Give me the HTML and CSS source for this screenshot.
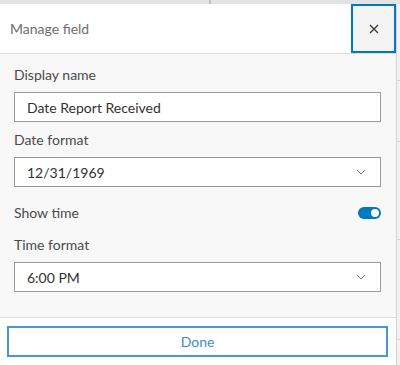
FILE: index.html
```html
<!DOCTYPE html>
<html lang="en">
<head>
    <meta charset="utf-8" />
    <meta name="viewport" content="width=device-width, initial-scale=1" />
    <title>Manage field</title>
    <link rel="stylesheet" href="styles.css">
</head>
<body>
    <div class="topbar"></div>
    <div class="layout">
        <div class="dialog">
            <div class="header">
                <div class="title">Manage field</div>
                <button class="close-button" aria-label="Close">
                    <svg width="10" height="10" viewBox="0 0 10 10">
                        <path d="M1 1 L9 9 M9 1 L1 9" stroke="#333" stroke-width="1.2" fill="none" />
                    </svg>
                </button>
            </div>

            <div class="body">
                <label class="field-label">Display name</label>
                <div class="input">Date Report Received</div>

                <label class="field-label">Date format</label>
                <div class="select">
                    <span>12/31/1969</span>
                    <svg class="chevron" width="10" height="6" viewBox="0 0 10 6">
                        <path d="M1 1 L5 5 L9 1" stroke="#777" stroke-width="1" fill="none" />
                    </svg>
                </div>

                <div class="toggle-row">
                    <span class="field-label">Show time</span>
                    <span class="switch"><span class="knob"></span></span>
                </div>

                <label class="field-label">Time format</label>
                <div class="select">
                    <span>6:00 PM</span>
                    <svg class="chevron" width="10" height="6" viewBox="0 0 10 6">
                        <path d="M1 1 L5 5 L9 1" stroke="#777" stroke-width="1" fill="none" />
                    </svg>
                </div>
            </div>

            <div class="footer">
                <button class="done-button">Done</button>
            </div>
        </div>

        <div class="aside">
            <div class="aside-row" style="height: 76px"></div>
            <div class="aside-row" style="height: 60px"></div>
            <div class="aside-row" style="height: 97px"></div>
            <div class="aside-row" style="height: 99px"></div>
        </div>
    </div>
</body>
</html>
```

FILE: styles.css
```css
body {
    font-family: Lato, 'Noto Sans', sans-serif;
    margin: 0;
    padding: 0;
    background-color: #f2f2f2;
    color: #4a4a4a;
    width: 400px;
    height: 365px;
    overflow: hidden;
}

.topbar {
    height: 4px;
    background: linear-gradient(to right, #e3e3e3 209px, #c4c4c4 209px, #c4c4c4 211px, #e3e3e3 211px);
}

.layout {
    display: flex;
}

.dialog {
    width: 396px;
    border-right: 1px solid #d4d4d4;
    background: white;
    display: flex;
    flex-direction: column;
    height: 361px;
}

.header {
    display: flex;
    height: 50px;
    border-bottom: 1px solid #dcdcdc;
    box-sizing: border-box;
}

.title {
    flex: 1;
    display: flex;
    align-items: center;
    padding-left: 10px;
    font-size: 14px;
    color: #6e6e6e;
}

.close-button {
    width: 45px;
    height: 49px;
    box-sizing: border-box;
    border: 2px solid #0079c1;
    background: #f3f3f3;
    display: flex;
    align-items: center;
    justify-content: center;
    padding: 0;
    margin: 0;
}

.body {
    background: #f8f8f8;
    padding: 11px 15px 0 14px;
    display: flex;
    flex-direction: column;
    height: 264px;
    box-sizing: border-box;
}

.field-label {
    font-size: 14px;
    line-height: 20px;
    color: #4a4a4a;
    margin-bottom: 7px;
}

.input,
.select {
    height: 30px;
    box-sizing: border-box;
    border: 1px solid #9a9a9a;
    background: white;
    padding: 0 12px;
    font-size: 14px;
    color: #323232;
    display: flex;
    align-items: center;
    margin-bottom: 8px;
}

.select {
    justify-content: space-between;
    padding-right: 14px;
}

.toggle-row {
    display: flex;
    justify-content: space-between;
    align-items: center;
    margin: 8px 0 12px;
    height: 20px;
}

.toggle-row .field-label {
    margin-bottom: 0;
}

.switch {
    width: 23px;
    height: 12px;
    border-radius: 6px;
    background: #0079c1;
    display: flex;
    align-items: center;
    justify-content: flex-end;
    padding-right: 2px;
    box-sizing: border-box;
}

.knob {
    width: 8px;
    height: 8px;
    border-radius: 50%;
    background: white;
}

.footer {
    border-top: 1px solid #dedede;
    padding: 8px 8px 8px 7px;
    background: white;
}

.done-button {
    width: 100%;
    height: 31px;
    box-sizing: border-box;
    border: 2px solid #4797d4;
    background: white;
    color: #3d8dcf;
    font-family: Lato, 'Noto Sans', sans-serif;
    font-size: 14px;
    padding: 0;
}

.aside {
    flex: 1;
    background: #f2f2f2;
}

.aside-row {
    border-bottom: 1px solid #d6d6d6;
}
```
